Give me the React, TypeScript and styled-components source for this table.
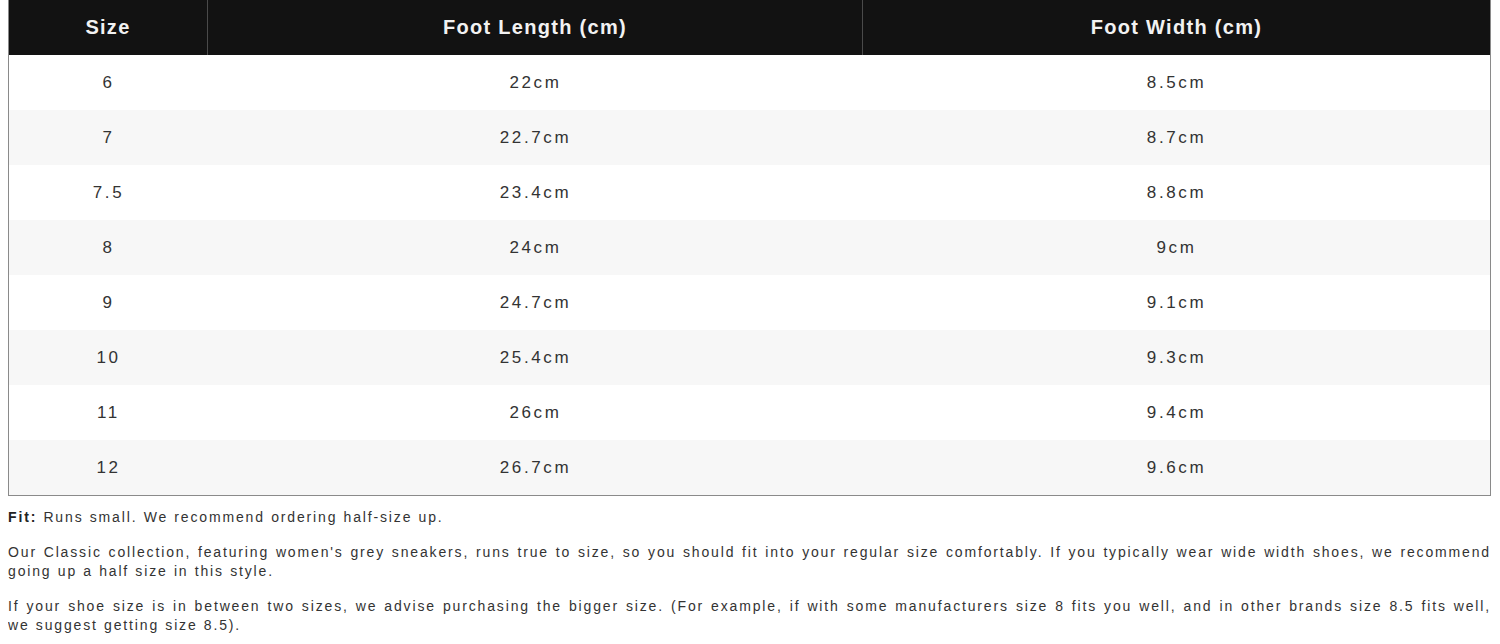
import React from 'react';
import styled, { createGlobalStyle } from 'styled-components';

const rows = [
  { size: '6', length: '22cm', width: '8.5cm' },
  { size: '7', length: '22.7cm', width: '8.7cm' },
  { size: '7.5', length: '23.4cm', width: '8.8cm' },
  { size: '8', length: '24cm', width: '9cm' },
  { size: '9', length: '24.7cm', width: '9.1cm' },
  { size: '10', length: '25.4cm', width: '9.3cm' },
  { size: '11', length: '26cm', width: '9.4cm' },
  { size: '12', length: '26.7cm', width: '9.6cm' },
];

const SizeGuide = () => {
  return (
    <Wrapper>
      <GlobalStyle />
      <Table>
        <colgroup>
          <col style={{ width: 199 }} />
          <col style={{ width: 655 }} />
          <col />
        </colgroup>
        <thead>
          <tr>
            <HeadCell>Size</HeadCell>
            <HeadCell>Foot Length (cm)</HeadCell>
            <HeadCell $last>Foot Width (cm)</HeadCell>
          </tr>
        </thead>
        <tbody>
          {rows.map((row, i) => (
            <Row key={row.size} $striped={i % 2 === 1}>
              <Cell>{row.size}</Cell>
              <Cell>{row.length}</Cell>
              <Cell>{row.width}</Cell>
            </Row>
          ))}
        </tbody>
      </Table>

      <Note>
        <strong>Fit:</strong> Runs small. We recommend ordering half-size up.
      </Note>
      <Note>
        Our Classic collection, featuring women's grey sneakers, runs true to size, so you should fit into your
        regular size comfortably. If you typically wear wide width shoes, we recommend going up a half size in
        this style.
      </Note>
      <Note>
        If your shoe size is in between two sizes, we advise purchasing the bigger size. (For example, if with some
        manufacturers size 8 fits you well, and in other brands size 8.5 fits well, we suggest getting size 8.5).
      </Note>
    </Wrapper>
  );
};

const GlobalStyle = createGlobalStyle`
  body {
    margin: 0 8px;
    background: #fff;
    font-family: "Liberation Sans", Arial, sans-serif;
    color: #333;
  }
`;

const Wrapper = styled.div`
  width: 1483px;
`;

const Table = styled.table`
  width: 100%;
  table-layout: fixed;
  border-collapse: separate;
  border-spacing: 0;
  border: 1px solid #8a8a8a;
  border-top: none;
`;

const HeadCell = styled.th<{ $last?: boolean }>`
  height: 55px;
  padding: 0;
  background: #121212;
  color: #f2f2f2;
  font-size: 20px;
  font-weight: 700;
  letter-spacing: 1.3px;
  text-align: center;
  border-right: ${(p) => (p.$last ? 'none' : '1px solid #4a4a4a')};
`;

const Row = styled.tr<{ $striped: boolean }>`
  background: ${(p) => (p.$striped ? '#f7f7f7' : '#fff')};
`;

const Cell = styled.td`
  height: 55px;
  padding: 0;
  text-align: center;
  font-size: 17px;
  letter-spacing: 2.6px;
  color: #333;
`;

const Note = styled.p`
  margin: 12px 0 16px;
  font-size: 14px;
  line-height: 19px;
  letter-spacing: 1.85px;
  word-spacing: 0.5px;
  text-align: justify;
  color: #333;

  strong {
    color: #222;
  }

  & + & {
    margin-top: 0;
  }
`;

export default SizeGuide;
